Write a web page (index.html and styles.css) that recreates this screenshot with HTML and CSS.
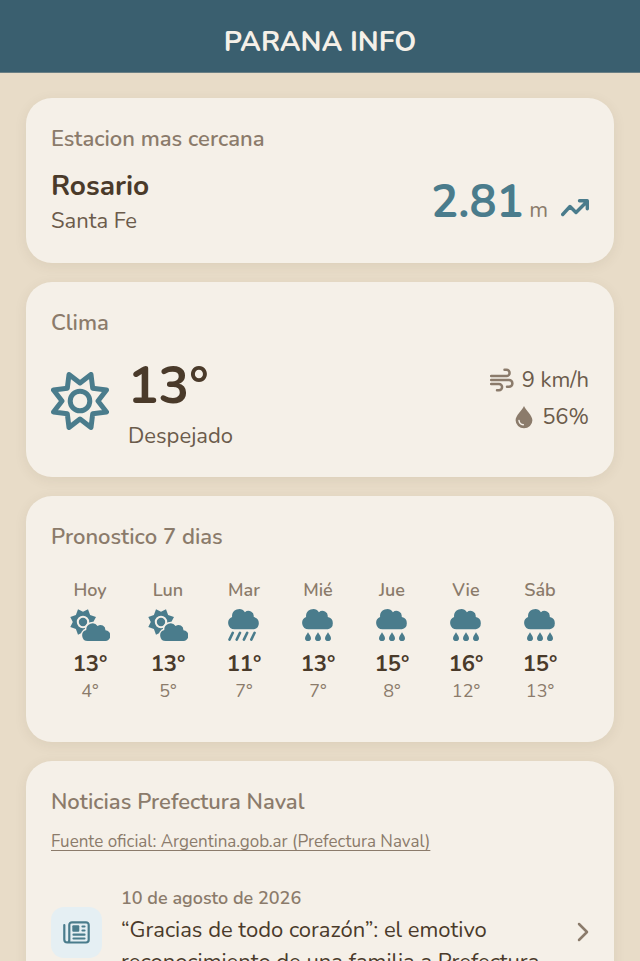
FILE: index.html
```html
<!DOCTYPE html>
<html lang="es">
<head>
    <meta charset="UTF-8">
    <meta name="viewport" content="width=device-width, initial-scale=1.0">
    <title>Parana Info</title>
    <link rel="stylesheet" href="styles.css">
</head>
<body>
    <!-- Iconos reutilizados en el pronostico -->
    <svg class="sprite" aria-hidden="true">
        <symbol id="icon-parcial" viewBox="0 0 40 32">
            <path class="relleno" d="M13 2.8 18 .3 20.1 5.9 26 8 23.3 13 26 18 20.1 20.1 18 25.8 13 23.2 8 25.8 5.9 20.1 .3 18 2.8 13 .3 8 5.9 5.9 8 .3Z"/>
            <circle class="hueco" cx="13" cy="13" r="5.2"/>
            <path class="nube-frente" d="M17.8 32A5.6 5.6 0 0 1 16.3 21A6.2 6.2 0 0 1 27.6 17.1A4.8 4.8 0 0 1 35.4 21.2A5.4 5.4 0 0 1 34.6 32Z"/>
        </symbol>
        <symbol id="icon-lluvia" viewBox="0 0 32 32">
            <path class="relleno" d="M6.5 20.3A6.4 6.4 0 0 1 4.1 8A7 7 0 0 1 16.9 3.3A5.3 5.3 0 0 1 25.7 8.1A6.2 6.2 0 0 1 25.8 20.3Z"/>
            <path class="relleno" d="M6 23.3C5 25.3 3 27.3 3 29.2a3 2.8 0 0 0 6 0C9 27.3 7 25.3 6 23.3ZM16 23.3C15 25.3 13 27.3 13 29.2a3 2.8 0 0 0 6 0C19 27.3 17 25.3 16 23.3ZM26 23.3C25 25.3 23 27.3 23 29.2a3 2.8 0 0 0 6 0C29 27.3 27 25.3 26 23.3Z"/>
        </symbol>
        <symbol id="icon-chaparron" viewBox="0 0 32 32">
            <path class="relleno" d="M6.5 20.3A6.4 6.4 0 0 1 4.1 8A7 7 0 0 1 16.9 3.3A5.3 5.3 0 0 1 25.7 8.1A6.2 6.2 0 0 1 25.8 20.3Z"/>
            <path class="gotas" d="M4.8 23.8 1.5 30.6M12 23.8 8.7 30.6M19.2 23.8 15.9 30.6M26.6 23.8 23.3 30.6"/>
        </symbol>
    </svg>

    <header class="header">
        <h1>PARANA INFO</h1>
    </header>

    <main class="container">
        <section class="card">
            <h2>Estacion mas cercana</h2>
            <div class="fila fila-estacion">
                <div>
                    <div class="estacion">Rosario</div>
                    <div class="detalle">Santa Fe</div>
                </div>
                <div class="altura">
                    <div><span class="altura-valor">2.81</span> <span class="altura-unidad">m</span></div>
                    <svg class="icon-tendencia" viewBox="0 0 28 18" aria-label="Subiendo">
                        <path d="M1.7 15.5 9 7.5 15 13.5 26 2.5M18.5 1.8H26.3V9.8"/>
                    </svg>
                </div>
            </div>
        </section>

        <section class="card">
            <h2>Clima</h2>
            <div class="fila">
                <div class="clima">
                    <svg class="icon-sol" viewBox="0 0 58 58" aria-hidden="true">
                        <path d="M29 11 40 2.5 41.7 16.3 55.5 18 47 29 55.5 40 41.7 41.7 40 55.5 29 47 18 55.5 16.3 41.7 2.5 40 11 29 2.5 18 16.3 16.3 18 2.5Z"/>
                        <circle cx="29" cy="29" r="9.8"/>
                    </svg>
                    <div>
                        <div class="temperatura">13°</div>
                        <div class="condicion">Despejado</div>
                    </div>
                </div>
                <div class="datos">
                    <div class="dato">
                        <svg class="icon-viento" viewBox="0 0 24 24" aria-hidden="true">
                            <path d="M1.2 8H16.5a3.1 3.1 0 0 0 0-6.2H14.5M1.2 12H19a3.4 3.4 0 0 1 0 6.8H17M1.2 16H9a3.1 3.1 0 0 1 0 6.2H7"/>
                        </svg>
                        <span>9 km/h</span>
                    </div>
                    <div class="dato">
                        <svg class="icon-gota" viewBox="2 0 20 24" aria-hidden="true">
                            <path class="gota" d="M12 1C10 5.5 3.6 10.5 3.6 15.3a8.4 8 0 0 0 16.8 0C20.4 10.5 14 5.5 12 1Z"/>
                            <path class="brillo" d="M7 15.5c.3 2.5 2 4 4.3 4.2"/>
                        </svg>
                        <span>56%</span>
                    </div>
                </div>
            </div>
        </section>

        <section class="card">
            <h2>Pronostico 7 dias</h2>
            <div class="pronostico">
                <div class="dia">
                    <span class="dia-nombre">Hoy</span>
                    <svg class="icon-dia ancho"><use href="#icon-parcial"/></svg>
                    <span class="maxima">13°</span>
                    <span class="minima">4°</span>
                </div>
                <div class="dia">
                    <span class="dia-nombre">Lun</span>
                    <svg class="icon-dia ancho"><use href="#icon-parcial"/></svg>
                    <span class="maxima">13°</span>
                    <span class="minima">5°</span>
                </div>
                <div class="dia">
                    <span class="dia-nombre">Mar</span>
                    <svg class="icon-dia"><use href="#icon-chaparron"/></svg>
                    <span class="maxima">11°</span>
                    <span class="minima">7°</span>
                </div>
                <div class="dia">
                    <span class="dia-nombre">Mié</span>
                    <svg class="icon-dia"><use href="#icon-lluvia"/></svg>
                    <span class="maxima">13°</span>
                    <span class="minima">7°</span>
                </div>
                <div class="dia">
                    <span class="dia-nombre">Jue</span>
                    <svg class="icon-dia"><use href="#icon-lluvia"/></svg>
                    <span class="maxima">15°</span>
                    <span class="minima">8°</span>
                </div>
                <div class="dia">
                    <span class="dia-nombre">Vie</span>
                    <svg class="icon-dia"><use href="#icon-lluvia"/></svg>
                    <span class="maxima">16°</span>
                    <span class="minima">12°</span>
                </div>
                <div class="dia">
                    <span class="dia-nombre">Sáb</span>
                    <svg class="icon-dia"><use href="#icon-lluvia"/></svg>
                    <span class="maxima">15°</span>
                    <span class="minima">13°</span>
                </div>
            </div>
        </section>

        <section class="card">
            <h2>Noticias Prefectura Naval</h2>
            <a class="fuente" href="#">Fuente oficial: Argentina.gob.ar (Prefectura Naval)</a>
            <a class="noticia" href="#">
                <span class="noticia-icono">
                    <svg class="icon-diario" viewBox="0 0 27 23" aria-hidden="true">
                        <path d="M1.3 4V18.5a3 3 0 0 0 3 3H23a2.7 2.7 0 0 0 2.7-2.7V4A2.7 2.7 0 0 0 23 1.3H9A2.7 2.7 0 0 0 6.3 4V18.8a2.5 2.5 0 0 1-2 2.7"/>
                        <path d="M19.5 5.5H21.5M19.5 9.5H21.5M10.5 13.7H21.5M10.5 17.5H21.5"/>
                        <rect class="relleno" x="9.3" y="4.2" width="7" height="6.5" rx="1"/>
                    </svg>
                </span>
                <span class="noticia-texto">
                    <span class="noticia-fecha">10 de agosto de 2026</span>
                    <span class="noticia-titulo">“Gracias de todo corazón”: el emotivo reconocimiento de una familia a Prefectura</span>
                </span>
                <svg class="icon-flecha" viewBox="0 0 12 20" aria-hidden="true">
                    <path d="M2 2 10 10 2 18"/>
                </svg>
            </a>
        </section>
    </main>
</body>
</html>
```
FILE: styles.css
```css
* {
    box-sizing: border-box;
}
body {
    font-family: 'Nunito', 'Open Sans', sans-serif;
    background-color: #e8dcc8;
    margin: 0;
    color: #4a3a2a;
    font-size: 22px;
    line-height: 30px;
}
svg {
    fill: none;
    stroke-linecap: round;
    stroke-linejoin: round;
    flex-shrink: 0;
}
.sprite {
    display: none;
}
.header {
    background-color: #3a5f6f;
    color: #f5f0e8;
    padding: 22px 26px 10px;
    border-bottom: 1px solid #6a7f85;
}
h1 {
    margin: 0;
    text-align: center;
    font-size: 28px;
    line-height: 40px;
    font-weight: 700;
}
.container {
    padding: 25px 26px;
    display: flex;
    flex-direction: column;
    gap: 19px;
}
.card {
    background-color: #f5f0e8;
    border-radius: 26px;
    padding: 26px 25px;
    box-shadow: 0 3px 13px rgba(74, 58, 42, 0.08);
}
h2 {
    margin: 0 0 13px;
    font-size: 22px;
    line-height: 30px;
    font-weight: 600;
    color: #8b7b6b;
}
.fila {
    display: flex;
    justify-content: space-between;
    align-items: center;
}

/* Estacion */
.fila-estacion {
    align-items: flex-end;
}
.estacion {
    font-size: 28px;
    line-height: 38px;
    font-weight: 700;
}
.detalle {
    line-height: 32px;
    color: #6b5b4b;
}
.altura {
    display: flex;
    align-items: baseline;
    gap: 13px;
    line-height: 54px;
}
.altura-valor {
    font-size: 45px;
    font-weight: 700;
    color: #4a7c8c;
}
.altura-unidad {
    color: #8b7b6b;
}
.icon-tendencia {
    width: 28px;
    height: 18px;
    stroke: #4a7c8c;
    stroke-width: 3.4;
}

/* Clima */
.clima {
    display: flex;
    align-items: center;
    gap: 19px;
}
.icon-sol {
    width: 58px;
    height: 58px;
    stroke: #4a7c8c;
    stroke-width: 5;
}
.temperatura {
    font-size: 51px;
    line-height: 70px;
    font-weight: 700;
}
.condicion {
    color: #6b5b4b;
}
.datos {
    display: flex;
    flex-direction: column;
    align-items: flex-end;
    gap: 7px;
    margin-bottom: 5px;
    color: #6b5b4b;
}
.dato {
    display: flex;
    align-items: center;
    gap: 8px;
}
.icon-viento {
    width: 24px;
    height: 24px;
    stroke: #8b7b6b;
    stroke-width: 2.5;
}
.icon-gota {
    width: 20px;
    height: 24px;
}
.gota {
    fill: #8b7b6b;
}
.brillo {
    stroke: #f5f0e8;
    stroke-width: 1.5;
}

/* Pronostico */
.pronostico {
    display: flex;
    overflow-x: auto;
    margin-top: 13px;
    padding: 13px 0;
}
.dia {
    display: flex;
    flex-direction: column;
    align-items: center;
    flex-shrink: 0;
    min-width: 74px;
    padding: 0 19px;
}
.dia-nombre,
.minima {
    font-size: 18px;
    line-height: 24px;
    color: #8b7b6b;
}
.dia-nombre {
    font-weight: 600;
}
.maxima {
    font-weight: 700;
}
.icon-dia {
    width: 32px;
    height: 32px;
    margin: 7px 0 8px;
}
.icon-dia.ancho {
    width: 40px;
}
.relleno {
    fill: #4a7c8c;
    stroke: none;
}
.hueco {
    fill: #4a7c8c;
    stroke: #f5f0e8;
    stroke-width: 2;
}
.nube-frente {
    fill: #4a7c8c;
    stroke: #f5f0e8;
    stroke-width: 3;
    paint-order: stroke;
}
.gotas {
    stroke: #4a7c8c;
    stroke-width: 2.6;
}

/* Noticias */
.fuente {
    display: block;
    font-size: 17px;
    line-height: 24px;
    color: #8b7b6b;
    text-decoration-thickness: 1px;
    text-underline-offset: 3px;
}
.noticia {
    display: flex;
    align-items: center;
    gap: 19px;
    margin-top: 13px;
    padding: 19px 0;
    color: #4a3a2a;
    text-decoration: none;
}
.noticia-icono {
    display: flex;
    align-items: center;
    justify-content: center;
    flex-shrink: 0;
    width: 51px;
    height: 51px;
    border-radius: 13px;
    background-color: #e5eff3;
}
.icon-diario {
    width: 27px;
    height: 23px;
    stroke: #4a7c8c;
    stroke-width: 2.2;
}
.noticia-texto {
    flex: 1;
}
.noticia-fecha,
.noticia-titulo {
    display: block;
}
.noticia-fecha {
    margin-bottom: 4px;
    font-size: 18px;
    line-height: 24px;
    font-weight: 600;
    color: #8b7b6b;
}
.noticia-titulo {
    line-height: 32px;
}
.icon-flecha {
    width: 12px;
    height: 20px;
    stroke: #8b7b6b;
    stroke-width: 2.5;
}
```
